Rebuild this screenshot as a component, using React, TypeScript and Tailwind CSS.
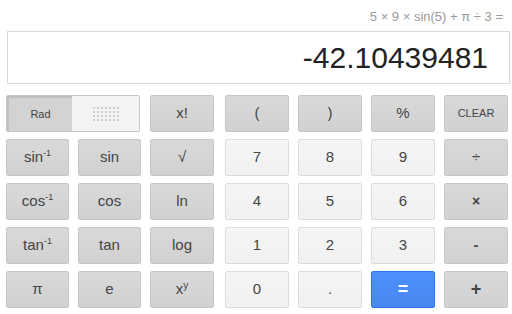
import type { ReactNode } from 'react'

type Kind = 'op' | 'num' | 'eq'

const kindClass: Record<Kind, string> = {
  op: 'bg-gradient-to-b from-[#d9d9d9] to-[#d1d1d1] border-[#c6c6c6] text-[#444]',
  num: 'bg-gradient-to-b from-[#f5f5f5] to-[#f1f1f1] border-[#dcdcdc] text-[#444]',
  eq: 'bg-gradient-to-b from-[#4d90fe] to-[#4787ed] border-[#3079ed] text-white',
}

function Key({ kind = 'op', children, small }: { kind?: Kind; children: ReactNode; small?: boolean }) {
  return (
    <button
      className={`h-[37px] flex items-center justify-center border rounded-[2px] ${kindClass[kind]} ${
        small ? 'text-[11px]' : 'text-[15px]'
      }`}
    >
      {children}
    </button>
  )
}

function Inv({ fn }: { fn: string }) {
  return (
    <span>
      {fn}
      <sup className="text-[9px] -top-[6px]">-1</sup>
    </span>
  )
}

function Dots() {
  const cells = []
  for (let r = 0; r < 4; r++) {
    for (let c = 0; c < 7; c++) {
      cells.push(<rect key={`${r}-${c}`} x={c * 4} y={r * 4} width={2} height={2} fill="#cfcfcf" />)
    }
  }
  return (
    <svg width="26" height="14" viewBox="0 0 26 14">
      {cells}
    </svg>
  )
}

export default function App() {
  return (
    <div
      className="w-[512px] h-[314px] bg-white overflow-hidden"
      style={{ fontFamily: '"Liberation Sans", Arial, sans-serif' }}
    >
      <div className="h-[31px] flex items-center justify-end pr-[9px] pt-[2px] text-[13px] text-[#999]">
        5 × 9 × sin(5) + π ÷ 3 =
      </div>
      <div className="mx-[7px] w-[503px] h-[53px] border border-[#d9d9d9] flex items-center justify-end pr-[21px]">
        <span className="text-[30px] text-[#222] leading-none">-42.10439481</span>
      </div>

      <div className="flex mt-[11px] ml-[6px]">
        <div className="grid grid-cols-[63px_63px_64px] gap-x-[9px] gap-y-[7px]">
          <div className="col-span-2 h-[37px] flex border border-[#c6c6c6] rounded-[2px] w-[134px]">
            <div className="w-[65px] h-full bg-[#d3d3d3] border-t-2 border-l-2 border-[#c0c0c0] flex items-center justify-center text-[11px] text-[#444]">
              Rad
            </div>
            <div className="flex-1 h-full bg-[#f3f3f3] flex items-center justify-center">
              <Dots />
            </div>
          </div>
          <Key>x!</Key>

          <Key><Inv fn="sin" /></Key>
          <Key>sin</Key>
          <Key>√</Key>

          <Key><Inv fn="cos" /></Key>
          <Key>cos</Key>
          <Key>ln</Key>

          <Key><Inv fn="tan" /></Key>
          <Key>tan</Key>
          <Key>log</Key>

          <Key>π</Key>
          <Key>e</Key>
          <Key>
            <span>
              x<sup className="text-[10px] -top-[5px]">y</sup>
            </span>
          </Key>
        </div>

        <div className="grid grid-cols-[64px_64px_64px_64px] gap-x-[9px] gap-y-[7px] ml-[11px]">
          <Key>(</Key>
          <Key>)</Key>
          <Key>%</Key>
          <Key small>CLEAR</Key>

          <Key kind="num">7</Key>
          <Key kind="num">8</Key>
          <Key kind="num">9</Key>
          <Key>÷</Key>

          <Key kind="num">4</Key>
          <Key kind="num">5</Key>
          <Key kind="num">6</Key>
          <Key><span className="font-bold text-[14px]">×</span></Key>

          <Key kind="num">1</Key>
          <Key kind="num">2</Key>
          <Key kind="num">3</Key>
          <Key><span className="font-bold">-</span></Key>

          <Key kind="num">0</Key>
          <Key kind="num">.</Key>
          <Key kind="eq"><span className="font-bold text-[18px]">=</span></Key>
          <Key><span className="font-bold text-[18px]">+</span></Key>
        </div>
      </div>
    </div>
  )
}
